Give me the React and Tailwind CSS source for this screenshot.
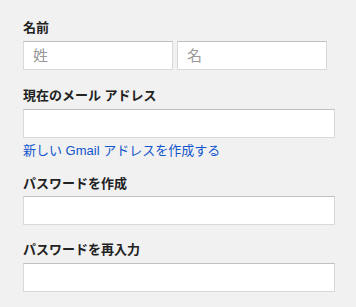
import React from 'react';

const font = { fontFamily: '"Liberation Sans", "Noto Sans CJK JP", sans-serif' };

const Label = ({ children, className = '' }) => (
  <div className={`text-[13px] font-bold leading-[16px] text-[#222] ${className}`}>{children}</div>
);

const Field = ({ placeholder, className = '' }) => (
  <input
    type="text"
    placeholder={placeholder}
    className={`h-[29px] bg-white border border-[#d9d9d9] border-t-[#c0c0c0] px-[9px] text-[15px] text-[#222] placeholder:text-[#999] outline-none ${className}`}
  />
);

const App = () => {
  return (
    <div className="w-[356px] h-[307px] bg-[#f1f1f1] pl-[23px] pt-[20px]" style={font}>
      <Label>名前</Label>
      <div className="flex gap-[4px] mt-[5px]">
        <Field placeholder="姓" className="w-[150px]" />
        <Field placeholder="名" className="w-[150px]" />
      </div>

      <Label className="mt-[18px]">現在のメール アドレス</Label>
      <Field className="block w-[312px] mt-[5px]" />
      <a href="#" className="block mt-[5px] text-[13px] leading-[16px] text-[#15c]">
        新しい Gmail アドレスを作成する
      </a>

      <Label className="mt-[17px]">パスワードを作成</Label>
      <Field className="block w-[312px] mt-[4px]" />

      <Label className="mt-[17px]">パスワードを再入力</Label>
      <Field className="block w-[312px] mt-[5px]" />
    </div>
  );
};

export default App;
